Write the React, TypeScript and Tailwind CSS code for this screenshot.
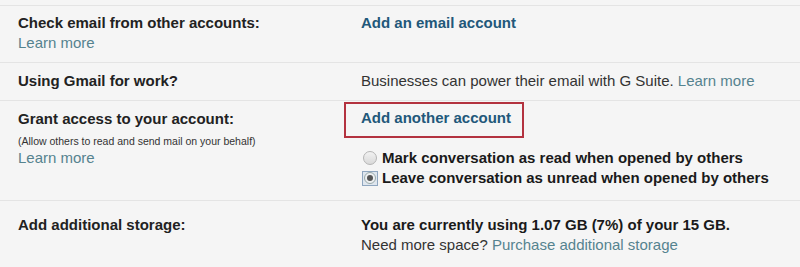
export default function App() {
  const font = { fontFamily: '"Liberation Sans", Arial, sans-serif' };
  return (
    <div className="w-[800px] h-[267px] overflow-hidden bg-[#f5f5f5] pt-[5px] text-[15px] leading-[20px] text-[#222]" style={font}>
      {/* Check email */}
      <div className="flex border-t border-[#e4e4e4] pt-[7px] h-[57px]">
        <div className="w-[361px] pl-[18px]">
          <div className="font-bold">Check email from other accounts:</div>
          <a className="text-[#55838f]">Learn more</a>
        </div>
        <div>
          <a className="font-bold text-[#22587a]">Add an email account</a>
        </div>
      </div>

      {/* G Suite */}
      <div className="flex border-t border-[#e4e4e4] pt-[8px] h-[38px]">
        <div className="w-[361px] pl-[18px] font-bold">Using Gmail for work?</div>
        <div className="text-[#333]">
          Businesses can power their email with G Suite. <a className="text-[#55838f]">Learn more</a>
        </div>
      </div>

      {/* Grant access */}
      <div className="flex border-t border-[#e4e4e4] h-[100px]">
        <div className="w-[361px] pl-[18px] pt-[8px]">
          <div className="font-bold">Grant access to your account:</div>
          <div className="mt-[5px] text-[10.5px] leading-[14px] text-[#333]">
            (Allow others to read and send mail on your behalf)
          </div>
          <a className="text-[#55838f]">Learn more</a>
        </div>
        <div className="pt-[1px]">
          <div className="-ml-[17px] w-[180px] border-2 border-[#b3323f] pl-[15px] pt-[4px] pb-[8px]">
            <a className="font-bold text-[#22587a]">Add another account</a>
          </div>
          <div className="mt-[10px] flex flex-col font-bold text-[#1a1a1a]">
            <label className="flex items-center">
              <span className="ml-[2px] mr-[5px] h-[14px] w-[14px] rounded-full border border-[#b5b5b5] bg-gradient-to-b from-[#f2f2f2] to-[#d9d9d9]" />
              Mark conversation as read when opened by others
            </label>
            <label className="flex items-center">
              <span className="ml-[1px] mr-[4px] flex h-[15px] w-[16px] items-center justify-center border border-[#8fa6bf] bg-[#dfe6ee]">
                <span className="flex h-[12px] w-[12px] items-center justify-center rounded-full border border-[#9aa] bg-[#eef0f2]">
                  <span className="h-[6px] w-[6px] rounded-full bg-[#555]" />
                </span>
              </span>
              Leave conversation as unread when opened by others
            </label>
          </div>
        </div>
      </div>

      {/* Storage */}
      <div className="flex border-t border-[#e4e4e4] pt-[14px] h-[67px]">
        <div className="w-[361px] pl-[18px] font-bold">Add additional storage:</div>
        <div>
          <div className="font-bold text-[#1a1a1a]">You are currently using 1.07 GB (7%) of your 15 GB.</div>
          <div className="text-[#333]">
            Need more space? <a className="text-[#55838f]">Purchase additional storage</a>
          </div>
        </div>
      </div>
    </div>
  );
}
